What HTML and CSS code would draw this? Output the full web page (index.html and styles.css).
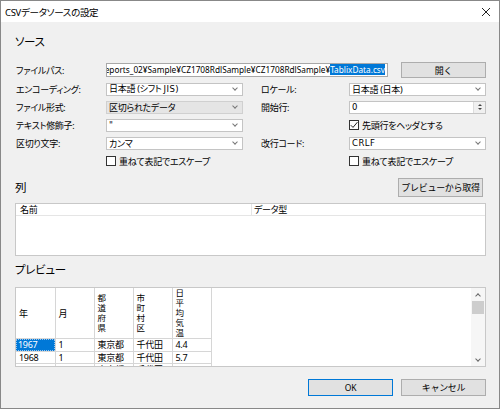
FILE: index.html
```
<!DOCTYPE html>
<html lang="ja">
<head>
    <meta charset="UTF-8">
    <title>CSVデータソースの設定</title>
    <link rel="stylesheet" href="styles.css">
</head>
<body>
    <div class="window">
        <div class="titlebar">
            <span class="title">CSVデータソースの設定</span>
            <svg class="close" width="10" height="10" viewBox="0 0 10 10"><path d="M1 1L9 9M9 1L1 9" stroke="#222" stroke-width="1"/></svg>
        </div>
        <div class="content">
            <div class="heading">ソース</div>
            <div class="path-row">
                <span class="label">ファイルパス:</span>
                <div class="textbox path"><span class="path-text">C:¥Reports_02¥Sample¥CZ1708RdlSample¥CZ1708RdlSample¥<span class="sel">TablixData.csv</span></span></div>
                <button class="btn open-btn">開く</button>
            </div>
            <div class="form-grid">
                <span class="label">エンコーディング:</span>
                <div class="combo"><span>日本語 (シフト <span class="latin">JIS</span>)</span><i class="chev"></i></div>
                <span class="label">ロケール:</span>
                <div class="combo"><span>日本語 (日本)</span><i class="chev"></i></div>

                <span class="label">ファイル形式:</span>
                <div class="combo readonly"><span>区切られたデータ</span><i class="chev"></i></div>
                <span class="label">開始行:</span>
                <div class="numeric">
                    <div class="num-box latin">0</div>
                    <div class="spin"><i class="up"></i><i class="down"></i></div>
                </div>

                <span class="label">テキスト修飾子:</span>
                <div class="combo"><span class="latin">"</span><i class="chev"></i></div>
                <span></span>
                <label class="check"><span class="box checked"><svg width="8" height="8" viewBox="0 0 8 8"><path d="M0.8 4.2L3 6.4L7.4 1.2" fill="none" stroke="#222" stroke-width="1"/></svg></span>先頭行をヘッダとする</label>

                <span class="label">区切り文字:</span>
                <div class="combo"><span>カンマ</span><i class="chev"></i></div>
                <span class="label">改行コード:</span>
                <div class="combo"><span class="latin">CRLF</span><i class="chev"></i></div>

                <span></span>
                <label class="check"><span class="box"></span>重ねて表記でエスケープ</label>
                <span></span>
                <label class="check"><span class="box"></span>重ねて表記でエスケープ</label>
            </div>

            <div class="columns-head">
                <div class="heading">列</div>
                <button class="btn fetch-btn">プレビューから取得</button>
            </div>
            <div class="listview">
                <div class="lv-head">
                    <span class="lv-name">名前</span>
                    <span class="lv-type">データ型</span>
                </div>
            </div>

            <div class="heading preview-heading">プレビュー</div>
            <div class="grid-box">
                <table class="grid">
                    <tr class="head">
                        <th>年</th>
                        <th>月</th>
                        <th><div class="vert">都道府県</div></th>
                        <th><div class="vert">市町村区</div></th>
                        <th><div class="vert">日平均気温</div></th>
                    </tr>
                    <tr>
                        <td class="current">1967</td><td>1</td><td>東京都</td><td>千代田</td><td>4.4</td>
                    </tr>
                    <tr>
                        <td>1968</td><td>1</td><td>東京都</td><td>千代田</td><td>5.7</td>
                    </tr>
                    <tr>
                        <td>1969</td><td>1</td><td>東京都</td><td>千代田</td><td>3.9</td>
                    </tr>
                </table>
                <div class="vscroll">
                    <i class="sb-up"></i>
                    <div class="sb-track"><div class="sb-thumb"></div></div>
                    <i class="sb-down"></i>
                </div>
            </div>

            <div class="footer">
                <button class="btn default-btn latin">OK</button>
                <button class="btn">キャンセル</button>
            </div>
        </div>
    </div>
</body>
</html>
```

FILE: styles.css
```
* {
    box-sizing: border-box;
}
body {
    margin: 0;
    font-family: "Noto Sans", "Noto Sans CJK JP", sans-serif;
    font-feature-settings: "palt";
    font-size: 9px;
    letter-spacing: -0.3px;
    color: #000;
}
.latin {
    font-family: "DejaVu Sans", sans-serif;
    font-size: 8.5px;
    letter-spacing: 0.5px;
}
.window {
    width: 500px;
    height: 409px;
    border: 1px solid #888;
    background-color: #f0f0f0;
    overflow: hidden;
}
.titlebar {
    height: 21px;
    background-color: #fff;
    display: flex;
    align-items: center;
    justify-content: space-between;
    padding: 0 8px 0 4px;
}
.title {
    font-size: 9.5px;
}
.content {
    padding: 0 13px 0 14px;
}
.heading {
    font-size: 11.5px;
    height: 16px;
    line-height: 16px;
}
.content > .heading:first-child {
    margin-top: 12px;
}
.label {
    padding-left: 1px;
    white-space: nowrap;
}
.path-row {
    display: flex;
    align-items: center;
    height: 18px;
    margin-top: 11px;
}
.path-row .label {
    width: 91px;
}
.textbox {
    height: 14px;
    background-color: #fff;
    border: 1px solid #a8a8a8;
}
.path {
    width: 282px;
    display: flex;
    justify-content: flex-end;
    overflow: hidden;
    padding-right: 2px;
    line-height: 12px;
    white-space: nowrap;
    font-size: 8.25px;
    letter-spacing: 0;
}
.path-text {
    flex-shrink: 0;
}
.sel {
    background-color: #0078d7;
    color: #fff;
}
.btn {
    font-family: inherit;
    font-size: 9px;
    letter-spacing: -0.3px;
    height: 17px;
    padding: 0;
    background-color: #e1e1e1;
    border: 1px solid #adadad;
    color: #000;
}
.open-btn {
    width: 85px;
    height: 16px;
    margin-left: 13px;
}
.form-grid {
    display: grid;
    grid-template-columns: 91px 137px 17px 89px 137px;
    grid-auto-rows: 18px;
    align-items: center;
    margin-top: 1px;
}
.form-grid > .label:nth-child(4n+3) {
    grid-column: 4;
}
.form-grid > :nth-child(4n+2) {
    grid-column: 2;
}
.form-grid > :nth-child(4n) {
    grid-column: 5;
}
.combo {
    height: 13px;
    background-color: #fff;
    border: 1px solid #c4c4c4;
    display: flex;
    align-items: center;
    justify-content: space-between;
    padding: 0 5px 0 2px;
    line-height: 11px;
}
.combo.readonly {
    background-color: #e5e5e5;
    border-color: #d0d0d0;
}
.chev {
    width: 4px;
    height: 4px;
    border-right: 1px solid #777;
    border-bottom: 1px solid #777;
    transform: translateY(-1px) rotate(45deg);
}
.numeric {
    display: flex;
    height: 13px;
    border: 1px solid #c4c4c4;
    background-color: #fff;
}
.num-box {
    flex: 1;
    padding-left: 2px;
    line-height: 11px;
}
.spin {
    width: 12px;
    display: flex;
    flex-direction: column;
    align-items: center;
    justify-content: center;
    gap: 2px;
    background-color: #f0f0f0;
    border-left: 1px solid #ddd;
}
.spin i {
    width: 0;
    height: 0;
    border-left: 2px solid transparent;
    border-right: 2px solid transparent;
}
.spin .up {
    border-bottom: 2px solid #444;
}
.spin .down {
    border-top: 2px solid #444;
}
.check {
    display: flex;
    align-items: center;
    gap: 3px;
    white-space: nowrap;
}
.box {
    width: 10px;
    height: 10px;
    border: 1px solid #333;
    background-color: #fff;
    display: flex;
    align-items: center;
    justify-content: center;
}
.columns-head {
    display: flex;
    justify-content: space-between;
    align-items: center;
    height: 19px;
    margin-top: 8px;
}
.fetch-btn {
    width: 85px;
    height: 19px;
    margin-right: 3px;
}
.listview {
    height: 53px;
    margin-top: 6px;
    background-color: #fff;
    border: 1px solid #c8c8c8;
}
.lv-head {
    display: flex;
    height: 12px;
    line-height: 11px;
    border-bottom: 1px solid #e5e5e5;
}
.lv-name {
    width: 236px;
    padding-left: 4px;
    border-right: 1px solid #e5e5e5;
}
.lv-type {
    padding-left: 2px;
}
.preview-heading {
    margin-top: 6px;
}
.grid-box {
    height: 80px;
    margin-top: 9px;
    background-color: #fff;
    border: 1px solid #c8c8c8;
    display: flex;
    justify-content: space-between;
    overflow: hidden;
}
.grid {
    border-collapse: collapse;
    align-self: flex-start;
}
.grid th,
.grid td {
    width: 39px;
    border: 1px solid #d6d6d6;
    padding: 0 0 0 3px;
    text-align: left;
    font-weight: normal;
    white-space: nowrap;
}
.grid tr.head th {
    height: 50px;
    border-top: none;
}
.grid th:first-child,
.grid td:first-child {
    border-left: none;
}
.grid td {
    height: 12.5px;
    line-height: 10px;
    padding-top: 1px;
}
.vert {
    width: 1em;
    white-space: normal;
    font-size: 8.5px;
    line-height: 10px;
    letter-spacing: 0;
}
.grid td.current {
    background-color: #0078d7;
    color: #fff;
    outline: 1px dotted #9cc7ee;
    outline-offset: -1px;
    padding-left: 2px;
}
.vscroll {
    width: 14px;
    display: flex;
    flex-direction: column;
    align-items: center;
    background-color: #f6f6f6;
    padding: 5px 0 4px;
}
.sb-up,
.sb-down {
    width: 4px;
    height: 4px;
    border-left: 1px solid #666;
    border-top: 1px solid #666;
}
.sb-up {
    transform: translateY(1px) rotate(45deg);
}
.sb-down {
    transform: translateY(-1px) rotate(225deg);
}
.sb-track {
    flex: 1;
    width: 100%;
    padding-top: 4px;
}
.sb-thumb {
    height: 13px;
    background-color: #cdcdcd;
    margin: 0 1px;
}
.footer {
    display: flex;
    justify-content: flex-end;
    gap: 8px;
    margin-top: 12px;
}
.footer .btn {
    width: 85px;
}
.default-btn {
    font-size: 8.5px;
    border-color: #0078d7;
}
```
